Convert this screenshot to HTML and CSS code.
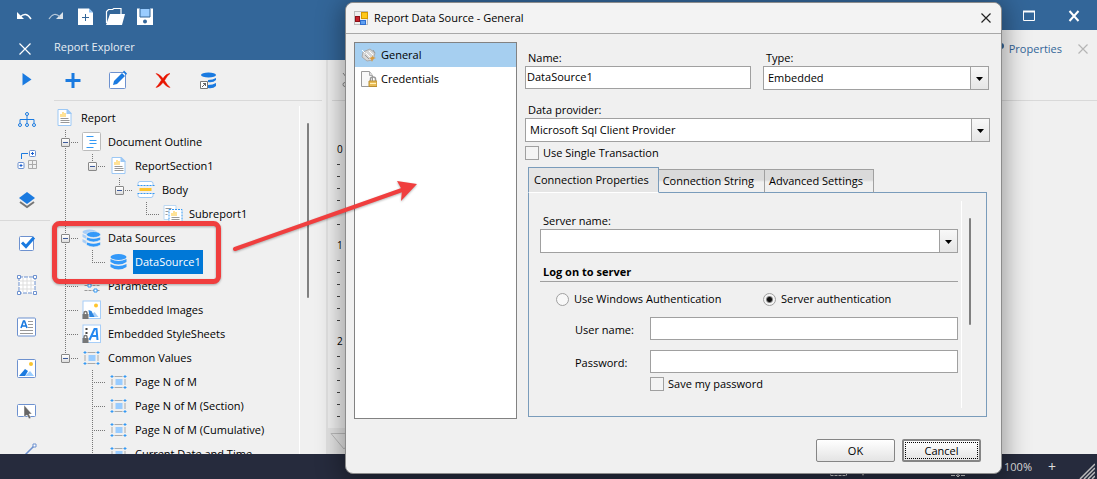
FILE: index.html
```html
<!DOCTYPE html>
<html lang="en">
<head>
<meta charset="utf-8">
<title>Report Designer</title>
<link rel="stylesheet" href="styles.css">
</head>
<body>
<svg class="symbols" aria-hidden="true">
  <symbol id="i-report" viewBox="0 0 20 20"><path d="M3.500 1.500h9l4 4v12h-13z" fill="#fff" stroke="#9cc8f5"/><path d="M12 1h1l4 4v1h-5z" fill="#9cc8f5"/><path d="M6.500 6v3M8.500 4v5M10.500 5v4" stroke="#ffc52e"/><path d="M6 10.500h8M6 12.500h9M6 14.500h9" stroke="#999"/></symbol>
  <symbol id="i-outline" viewBox="0 0 20 20"><rect x="1" y=".5" width="18" height="18" rx="1" fill="#fff" stroke="#bbb"/><path d="M5 4.500h7M8 8.500h7M8 11.500h7M5 15.500h7" stroke="#3399f5"/></symbol>
  <symbol id="i-body" viewBox="0 0 20 20"><path d="M2.500 5V3.500q0-2 2-2h11q2 0 2 2V5M2.500 14v1.500q0 2 2 2h11q2 0 2-2V14" fill="#fff" stroke="#9cc8f5"/><path d="M2 5.500h17M2 13.500h17" stroke="#3399f5" stroke-dasharray="2 1"/><path d="M4 8h12v3H4z" fill="#ffc52e"/></symbol>
  <symbol id="i-subreport" viewBox="0 0 20 20"><path d="M1.500 1.500h12v14h-12z" fill="#fff" stroke="#bcd8f2"/><path d="M3 4.500h6M3 7.500h3M3 10.500h2" stroke="#999"/><path d="M6.500 5.500h13v13h-13z" fill="#fff" stroke="#3399f5" stroke-dasharray="2 1"/><path d="M9.500 9v3M11.500 7v5M13.500 8v4" stroke="#ffc52e"/><path d="M9 13.500h8M9 15.500h8" stroke="#999"/></symbol>
  <symbol id="i-db" viewBox="0 0 20 20"><g fill="#3399f9"><ellipse cx="10" cy="5" rx="8" ry="3"/><path d="M2 7q8 4 16 0v3q-8 5-16 0zM2 12q8 4 16 0v3q-8 5-16 0z"/></g></symbol>
  <symbol id="i-dbs" viewBox="0 0 20 20"><g fill="#a7cef8"><ellipse cx="8" cy="4" rx="7" ry="2.500"/><path d="M1 6l4 2v3l-4-2zM1 11l4 2v3l-4-2z"/></g><g fill="#3399f9" stroke="#f0f0f0" stroke-width=".6"><ellipse cx="12" cy="6.500" rx="7" ry="3"/><path d="M5 9q7 3 14 0v3q-7 4-14 0zM5 14q7 3 14 0v3q-7 4-14 0z"/></g></symbol>
  <symbol id="i-params" viewBox="0 0 20 20"><path d="M3 9.500h16M3 14.500h16" stroke="#999" stroke-dasharray="3 1"/><path d="M6.500 8h3v3h-3zM12.500 13h3v3h-3z" fill="#fff" stroke="#3399f5"/></symbol>
  <symbol id="i-lock" viewBox="0 0 20 20"><path d="M2.500 15v-2q0-1.500 1.500-1.500T5.500 13v2" fill="none" stroke="#777" stroke-width="1.500"/><path d="M1 14h6v5H1z" fill="#777"/></symbol>
  <symbol id="i-images" viewBox="0 0 20 20"><rect x="1.500" y="1" width="17.500" height="17.500" fill="#fff" stroke="#a7cef8"/><circle cx="14.500" cy="5.500" r="2" fill="#ffc52e"/><path d="M7 17l6-5 4 5z" fill="#a7cef8"/><path d="M7 10l3 1 3 6H8z" fill="#2f86e0"/><use href="#i-lock"/></symbol>
  <symbol id="i-styles" viewBox="0 0 20 20"><rect x="1.500" y="1" width="17.500" height="17.500" fill="#fff" stroke="#a7cef8"/><path d="M4 4h2v2H4zM4 8h2v2H4z" fill="#444"/><path d="M8 16l5-11h2l1 11M10 12h6" fill="none" stroke="#2488f0" stroke-width="2"/><use href="#i-lock"/></symbol>
  <symbol id="i-value" viewBox="0 0 20 20"><path d="M6 4.500h8M6 15.500h8M3.500 7v6M16.500 7v6" stroke="#aaa"/><path d="M7 7h7v6H7z" fill="#99ccff"/><path d="M3.500 3v3M2 4.500h3M16.500 3v3M15 4.500h3M3.500 14v3M2 15.500h3M16.500 14v3M15 15.500h3" stroke="#3399f5"/></symbol>
</svg>

<div class="app">
  <header class="titlebar">
    <div class="quick">
      <button aria-label="Undo"><svg width="18" height="18" viewBox="0 0 18 18"><path d="M1 4v7h7z" fill="#fff"/><path d="M4 9Q10 3 15 11" fill="none" stroke="#fff" stroke-width="1.500"/></svg></button>
      <button aria-label="Redo"><svg width="18" height="18" viewBox="0 0 18 18"><path d="M17 4v7h-7z" fill="#dce3ea"/><path d="M14 9Q8 3 3 11" fill="none" stroke="#b9c9da" stroke-width="1.200"/></svg></button>
      <button aria-label="New"><svg width="18" height="18" viewBox="0 0 18 18"><path d="M2 .5h11l4 4V17H2z" fill="#fff"/><path d="M13 .5l4 4h-4z" fill="#8cc0f5"/><path d="M9.500 6v7M6 9.500h7" stroke="#336699"/></svg></button>
      <button aria-label="Open"><svg width="20" height="18" viewBox="0 0 20 18"><path d="M1.500 15V3.500l2-2h4l1.500-1h7V6" fill="none" stroke="#fff" stroke-width="1.200"/><path d="M5 6h15l-3 11H1z" fill="#fff"/></svg></button>
      <button aria-label="Save"><svg width="18" height="18" viewBox="0 0 18 18"><path d="M1 .5h16V17H1z" fill="#fff"/><path d="M4 .5h10V9H4z" fill="#99ccff" stroke="#336699"/><circle cx="9" cy="13.500" r="2" fill="#336699"/></svg></button>
    </div>
    <div class="window-buttons">
      <button aria-label="Maximize"><svg width="14" height="12" viewBox="0 0 14 12"><path d="M1.500 1.500h11v9h-11z" fill="none" stroke="#fff"/><path d="M1 1.500h12" stroke="#fff" stroke-width="2"/></svg></button>
      <button aria-label="Close window"><svg width="12" height="12" viewBox="0 0 12 12"><path d="M1.500 1l9 10M10.500 1l-9 10" stroke="#fff" stroke-width="2"/></svg></button>
    </div>
  </header>

  <main class="workspace">
    <nav class="rail" aria-label="Tools">
      <div class="rail-head"><button aria-label="Close panel"><svg width="12" height="12" viewBox="0 0 12 12"><path d="M.5.5l11 11M11.500.5l-11 11" stroke="#fff" stroke-width="1.200"/></svg></button></div>
      <div class="rail-group">
        <button aria-label="Preview"><svg width="20" height="20" viewBox="0 0 20 20"><path d="M5.500 3l9 6.500-9 6z" fill="#1a7ae0"/></svg></button>
        <button aria-label="Explorer"><svg width="20" height="20" viewBox="0 0 20 20"><g fill="none" stroke="#1a7ae0"><circle cx="10" cy="4" r="1.500"/><circle cx="3" cy="15" r="1.500"/><circle cx="10" cy="15" r="1.500"/><circle cx="17" cy="15" r="1.500"/><path d="M10 5.500v8M3 13V9.500h14V13"/></g></svg></button>
        <button aria-label="Groups"><svg width="20" height="20" viewBox="0 0 20 20"><path d="M4.500 9V3.500H11" fill="none" stroke="#1a7ae0"/><g fill="#fff" stroke="#6d91cf"><rect x="12.500" y=".5" width="6" height="6" rx="1"/><rect x="1" y="12.500" width="6" height="6" rx="1"/></g><path d="M14 3.500h3M15.500 2v3M2.500 15.500h3M4 14v3" stroke="#1a5fd0"/><path d="M11.500 10.500h8v8h-8zM15.500 10.500v8M11.500 14.500h8" fill="none" stroke="#aaa"/></svg></button>
        <button aria-label="Layers"><svg width="20" height="20" viewBox="0 0 20 20"><path d="M10 2l8 6-8 6-8-6z" fill="#1a7ae0"/><path d="M3 12l7 5 7-5" fill="none" stroke="#777" stroke-width="2"/></svg></button>
      </div>
      <div class="rail-group rail-items">
        <button aria-label="Check box"><svg width="20" height="20" viewBox="0 0 20 20"><rect x="2.500" y="3.500" width="14" height="14" rx="1" fill="#fff" stroke="#6d91cf"/><path d="M5 9.500l4 4 8-9" fill="none" stroke="#1a7ae0" stroke-width="3"/></svg></button>
        <button aria-label="Panel"><svg width="20" height="20" viewBox="0 0 20 20"><path d="M2 2h16v16H2z" fill="#fff"/><path d="M6 3v14M10 3v14M14 3v14M3 6h14M3 10h14M3 14h14" stroke="#ddd"/><path d="M2 2h16v16H2z" fill="none" stroke="#6d91cf" stroke-dasharray="4 1"/><path d="M.5.5h3v3h-3zM16.500.5h3v3h-3zM.5 16.500h3v3h-3zM16.500 16.500h3v3h-3z" fill="#fff" stroke="#6d91cf"/></svg></button>
        <button aria-label="Text box"><svg width="20" height="20" viewBox="0 0 20 20"><rect x=".5" y="1" width="18" height="18" rx="1" fill="#fff" stroke="#6d91cf"/><path d="M4 11l2.500-7h1L10 11M5 9h4" fill="none" stroke="#1a7ae0" stroke-width="1.600"/><path d="M11 4.500h5M11 7.500h5M11 10.500h5M3 13.500h13M3 16.500h13" stroke="#999"/></svg></button>
        <button aria-label="Picture"><svg width="20" height="20" viewBox="0 0 20 20"><rect x=".5" y=".5" width="18" height="18" rx="1" fill="#fff" stroke="#6d91cf"/><circle cx="14" cy="5" r="2" fill="#f8c32e"/><path d="M8 17l5-5 4 5z" fill="#99ccff"/><path d="M2 17l6-7 3 2-3 5z" fill="#1a7ae0"/></svg></button>
        <button aria-label="Button"><svg width="20" height="20" viewBox="0 0 20 20"><rect x=".5" y="3.500" width="18" height="12" rx="1" fill="#fff" stroke="#6d91cf"/><path d="M7 4v12l3-2 2 4 2-1-2-4h3z" fill="#666" stroke="#fff" stroke-width=".5"/></svg></button>
        <button aria-label="Line"><svg width="20" height="20" viewBox="0 0 20 20"><path d="M4 16L17 3" stroke="#6d91cf" stroke-width="1.500"/><path d="M16 1h3v3h-3z" fill="#fff" stroke="#6d91cf"/></svg></button>
      </div>
    </nav>

    <section class="explorer">
      <h2 class="panel-head">Report Explorer</h2>
      <div class="tools">
        <button aria-label="Add"><svg width="20" height="20" viewBox="0 0 20 20"><path d="M10 3v15M2.500 10.500h15" stroke="#1a7ae0" stroke-width="3"/></svg></button>
        <button aria-label="Edit"><svg width="20" height="20" viewBox="0 0 20 20"><rect x="1.500" y="2.500" width="16" height="16" rx="1" fill="#fff" stroke="#6d91cf"/><path d="M5 15l1-4 8-8 3 3-8 8zM15 2l1-1.500 3 3L18 5z" fill="#1a7ae0"/></svg></button>
        <button aria-label="Delete"><svg width="20" height="20" viewBox="0 0 20 20"><path d="M3 3.500q3 0 7 5 3-5 7-5-3 2-5.500 7 3 5 5.500 7-3 0-7-5-4 5-7 5 2-2 5.500-7.500Q6 6 3 3.500z" fill="#e81500" stroke="#e81500" stroke-width=".5"/></svg></button>
        <button aria-label="Add data source"><svg width="20" height="20" viewBox="0 0 20 20"><g fill="#1a7ae0"><ellipse cx="10.500" cy="5" rx="7.500" ry="2.500"/><path d="M10 10q5 0 8-2v2q-3 3-8 2zM10 15q5 0 8-2v3q-3 3-8 2z"/></g><path d="M2.500 11.500h7v7h-7z" fill="#fff" stroke="#777"/><path d="M4 17l4-4M5 13.500h2.500V16" fill="none" stroke="#666"/></svg></button>
      </div>
      <div class="tree-area">
        <ul class="tree">
          <li><svg><use href="#i-report"/></svg><span>Report</span></li>
          <li><i class="v h"><b></b></i><svg><use href="#i-outline"/></svg><span>Document Outline</span></li>
          <li><i class="v"></i><i class="end h"><b></b></i><svg><use href="#i-report"/></svg><span>ReportSection1</span></li>
          <li><i class="v"></i><i></i><i class="end h"><b></b></i><svg><use href="#i-body"/></svg><span>Body</span></li>
          <li><i class="v"></i><i></i><i></i><i class="end h"></i><svg><use href="#i-subreport"/></svg><span>Subreport1</span></li>
          <li><i class="v h"><b></b></i><svg><use href="#i-dbs"/></svg><span>Data Sources</span></li>
          <li><i class="v"></i><i class="end h"></i><svg><use href="#i-db"/></svg><span class="selected">DataSource1</span></li>
          <li><i class="v h"></i><svg><use href="#i-params"/></svg><span>Parameters</span></li>
          <li><i class="v h"></i><svg><use href="#i-images"/></svg><span>Embedded Images</span></li>
          <li><i class="v h"></i><svg><use href="#i-styles"/></svg><span>Embedded StyleSheets</span></li>
          <li><i class="end h"><b></b></i><svg><use href="#i-value"/></svg><span>Common Values</span></li>
          <li><i></i><i class="v h"></i><svg><use href="#i-value"/></svg><span>Page N of M</span></li>
          <li><i></i><i class="v h"></i><svg><use href="#i-value"/></svg><span>Page N of M (Section)</span></li>
          <li><i></i><i class="v h"></i><svg><use href="#i-value"/></svg><span>Page N of M (Cumulative)</span></li>
          <li><i></i><i class="v h"></i><svg><use href="#i-value"/></svg><span>Current Date and Time</span></li>
        </ul>
        <div class="scroll"><div class="thumb"></div></div>
      </div>
    </section>

    <section class="designer">
      <div class="panel-head"></div>
      <div class="design-tools"><svg width="12" height="16" viewBox="0 0 12 16"><path d="M1 1l7 9M10 1L4 10" stroke="#888"/><circle cx="3" cy="12.500" r="2" fill="none" stroke="#888"/></svg></div>
      <div class="ruler"><span>0</span><span>1</span><span>2</span></div>
      <div class="corner"><svg width="30" height="24" viewBox="0 0 30 24"><path d="M3 5.500h26L16 21z" fill="none" stroke="#bbb"/></svg></div>
    </section>

    <section class="properties">
      <div class="prop-head"><svg width="12" height="12" viewBox="0 0 12 12"><circle cx="8" cy="5" r="3" fill="#33669a"/></svg><h2>Properties</h2><button aria-label="Close properties"><svg width="10" height="10" viewBox="0 0 10 10"><path d="M.5.5l9 9M9.500.5l-9 9" stroke="#b5b5b5" stroke-width="1.200"/></svg></button></div>
    </section>
  </main>

  <footer class="status">
    <svg width="40" height="18" viewBox="0 0 40 18"><path d="M1.500 3.500h16v11h-16z" fill="none" stroke="#ccc" stroke-dasharray="3 1"/><path d="M31 10h6l-3 5z" fill="#999"/></svg>
    <svg class="fit" width="18" height="18" viewBox="0 0 18 18"><path d="M2 14.500h4M12 14.500h4M9 7v9M7 14l2 2 2-2" fill="none" stroke="#ccc"/></svg>
    <span class="zoom">100%</span>
    <button aria-label="Zoom in">+</button>
    <svg class="grip" width="16" height="16" viewBox="0 0 16 16"><path d="M1 16L16 1M5 16L16 5M9 16l7-7M13 16l3-3" stroke="#bbb" stroke-width="1.500"/></svg>
  </footer>
</div>

<form class="dialog" role="dialog" aria-labelledby="dialog-title">
  <div class="dialog-title">
    <svg width="15" height="15" viewBox="0 0 15 15"><rect x=".5" y=".5" width="13" height="13" fill="#eee" stroke="#bbb"/><rect x="7.500" y="1.500" width="6" height="6" fill="#ffc81a" stroke="#d69a00"/><rect x="1.500" y="5.500" width="4" height="5" fill="#c8202a" stroke="#8c1018"/><rect x="6.500" y="9.500" width="5" height="4" fill="#5f9ff0" stroke="#2f6fd0"/></svg>
    <h1 id="dialog-title">Report Data Source - General</h1>
    <button type="button" aria-label="Close"><svg width="10" height="10" viewBox="0 0 10 10"><path d="M.5.5l9 9M9.500.5l-9 9" stroke="#222" stroke-width="1.200"/></svg></button>
  </div>
  <div class="dialog-body">
    <ul class="pages">
      <li class="current"><svg width="16" height="16" viewBox="0 0 16 16"><path d="M2 5l7-3 5 4-2 7-6 1-5-4z" fill="#d7d7d7" stroke="#aaa"/><path d="M1 3l3 3M5 6l5 5M8 4l4 4" stroke="#fff"/><path d="M4 8l4 4M12 3l2 3" stroke="#999"/><path d="M11 8l1 2 3 1-3 1-1 3-1-3-2-1 3-1z" fill="#d99a3a"/></svg>General</li>
      <li><svg width="16" height="16" viewBox="0 0 16 16"><path d="M.5.5h8l3 4v11H.5z" fill="#f8f8f8" stroke="#999"/><path d="M8.500.5v4h3" fill="#ddd" stroke="#aaa"/><path d="M9.500 10V8q0-2 2.500-2t2.500 2v2" fill="none" stroke="#999" stroke-width="1.500"/><path d="M8 10h8v5.500H8z" fill="#e9bd57" stroke="#b98e33"/><path d="M9 12.500h6" stroke="#fff0bb"/></svg>Credentials</li>
    </ul>
    <div class="settings">
      <div class="pair">
        <div class="field"><label for="name">Name:</label><input class="box" id="name" value="DataSource1"></div>
        <div class="field"><label for="type">Type:</label><div class="combo"><select id="type"><option>Embedded</option></select></div></div>
      </div>
      <div class="field provider"><label for="provider">Data provider:</label><div class="combo"><select id="provider"><option>Microsoft Sql Client Provider</option></select></div></div>
      <label class="check"><input type="checkbox">Use Single Transaction</label>
      <div class="tabs" role="tablist">
        <button type="button" role="tab" aria-selected="true">Connection Properties</button>
        <button type="button" role="tab">Connection String</button>
        <button type="button" role="tab">Advanced Settings</button>
      </div>
      <div class="tab-panel">
        <div class="connection">
          <div class="field"><label for="server">Server name:</label><div class="combo"><select id="server"><option></option></select></div></div>
          <h3>Log on to server</h3>
          <div class="radios">
            <label><input type="radio" name="auth">Use Windows Authentication</label>
            <label><input type="radio" name="auth" checked>Server authentication</label>
          </div>
          <div class="login">
            <label for="user">User name:</label><input class="box" id="user">
            <label for="password">Password:</label><input class="box" id="password" type="password">
          </div>
          <label class="check save"><input type="checkbox">Save my password</label>
        </div>
        <div class="scroll"><div class="thumb"></div></div>
      </div>
      <div class="actions"><button type="button">OK</button><button type="button" class="focused">Cancel</button></div>
    </div>
  </div>
</form>

<svg class="callout" width="420" height="300" viewBox="0 0 420 300" aria-hidden="true">
  <rect x="54.500" y="223.500" width="164" height="58" rx="5" fill="none" stroke="#f03e3e" stroke-width="5"/>
  <path d="M235 249L402 190" stroke="#f03e3e" stroke-width="4" stroke-linecap="round"/>
  <path d="M417 184l-20-3 5 9-1 11z" fill="#f03e3e"/>
</svg>
</body>
</html>
```
FILE: styles.css
```css
* { box-sizing: border-box; }
body { margin: 0; font: 11px/16px "Open Sans", "Noto Sans", sans-serif; color: #000; overflow: hidden; }
h1, h2, h3, ul { margin: 0; padding: 0; font: inherit; list-style: none; }
button, input, select { font: inherit; color: inherit; margin: 0; }
button { border: 0; padding: 0; background: none; display: flex; align-items: center; justify-content: center; }
svg { display: block; flex: none; }
.symbols { position: absolute; width: 0; height: 0; }

.app { height: 100vh; display: flex; flex-direction: column; background: #f0f0f0; }
.titlebar { height: 30px; flex: none; display: flex; justify-content: space-between; background: #336699; }
.quick { display: flex; padding: 3px 0 0 10px; }
.quick button { width: 30px; }
.window-buttons { display: flex; padding: 2px 1px 0 0; }
.window-buttons button { width: 45px; }

.workspace { flex: 1; min-height: 0; display: flex; overflow: hidden; }
.rail { width: 50px; flex: none; }
.rail-head { height: 30px; background: #336699; padding: 13px 0 0 19px; }
.rail-group button { width: 100%; height: 40px; padding-left: 3px; }
.rail-items { border-top: 1px solid #d9d9d9; padding-top: 1px; }
.rail-items button { height: 42px; }

.panel-head { height: 30px; flex: none; background: #336699; color: #e6edf4; padding: 9px 0 0 4px; }
.explorer { width: 278px; flex: none; display: flex; flex-direction: column; border-right: 2px solid #e2e2e2; }
.explorer .panel-head { margin-right: -2px; }
.tools { height: 41px; flex: none; display: flex; border-bottom: 1px solid #d9d9d9; margin: 0 4px; }
.tools button { width: 45px; }
.tools button:first-child { width: 41px; padding-right: 4px; }
.tree-area { flex: 1; min-height: 0; display: flex; padding: 5px 17px 0 2px; }
.tree { flex: 1; overflow: hidden; }
.tree li { display: flex; height: 24px; align-items: center; white-space: nowrap; }
.tree svg { width: 25px; height: 20px; margin-right: 2px; }
.tree span { padding: 0 2px; line-height: 24px; }
.tree .selected { background: #0078d7; color: #fff; }
.tree i {
  width: 27px; height: 24px; flex: none; display: flex; align-items: center; padding-left: 9px;
  --down: repeating-linear-gradient(#777 0 1px, transparent 1px 2px);
  --across: repeating-linear-gradient(to right, #777 0 1px, transparent 1px 2px);
  background-repeat: no-repeat;
}
.tree .v { background-image: linear-gradient(transparent, transparent), var(--down); background-size: 0 0, 1px 100%; background-position: 0 0, 13px 0; }
.tree .h { background-image: var(--across), var(--down); background-size: 14px 1px, 1px 100%; background-position: 13px 12px, 13px 0; }
.tree .end { background-size: 14px 1px, 1px 12px; }
.tree b {
  width: 9px; height: 9px; border: 1px solid #888; border-radius: 1px;
  background: linear-gradient(#3c5a9a, #3c5a9a) center / 5px 1px no-repeat, linear-gradient(#fff, #ddd);
}
.scroll { display: flex; }
.tree-area .scroll { border-left: 1px solid #fff; padding: 17px 0 0 7px; }
.thumb { width: 2px; background: #808080; border-radius: 1px; }
.tree-area .thumb { height: 175px; }

.designer { flex: 1; display: flex; flex-direction: column; min-width: 0; }
.design-tools { height: 41px; flex: none; padding: 12px 0 0 10px; margin-left: 4px; border-bottom: 1px solid #d9d9d9; }
.ruler { flex: 1; min-height: 0; overflow: hidden; padding: 40px 0 0 9px; font-size: 10px; display: flex; flex-direction: column; }
.ruler span { height: 96px; flex: none; background: repeating-linear-gradient(transparent 0 11px, #444 11px 12px) 0 12px / 3px 72px no-repeat; }
.corner { flex: none; background: #e4e4e4; height: 26px; }
.properties { width: 110px; flex: none; }
.prop-head { height: 71px; border-bottom: 1px solid #d9d9d9; color: #336699; display: flex; align-items: flex-start; justify-content: flex-end; gap: 4px; padding: 11px 9px 0 0; }
.prop-head button { padding: 3px 0 0 12px; }
.status { height: 25px; flex: none; background: #262b3d; color: #ddd; display: flex; align-items: center; justify-content: flex-end; }
.status .fit { margin: 0 37px 0 80px; }
.status svg { align-self: flex-end; }
.status button { width: 40px; font-size: 14px; }
.status .grip { margin: 0 2px 0 7px; }

.dialog {
  position: absolute; inset: 2px 95px 5px 345px; display: flex; flex-direction: column;
  background: #f0f0f0; border: 1px solid #8c8c8c; border-radius: 8px; box-shadow: 0 4px 24px 4px rgba(0, 0, 0, .35);
}
.dialog-title { height: 31px; flex: none; display: flex; align-items: center; gap: 5px; padding: 0 10px 0 8px; border-bottom: 1px solid #a8a8a8; background: #f3f3f3; border-radius: 8px 8px 0 0; }
.dialog-title h1 { flex: 1; }
.dialog-body { flex: 1; min-height: 0; display: flex; gap: 8px; padding: 8px 11px 11px 8px; }
.pages { width: 163px; flex: none; border: 1px solid #828282; background: #fff; margin-bottom: 43px; }
.pages li { height: 24px; display: flex; align-items: center; gap: 4px; padding-left: 6px; }
.pages .current { background: #a6cff0; }
.settings { flex: 1; display: flex; flex-direction: column; min-width: 0; padding-top: 8px; }
.pair { display: grid; grid-template-columns: 1fr 1fr; gap: 12px; padding-right: 1px; }
.field { display: flex; flex-direction: column; }
.field > label { padding-left: 3px; }
.box { width: 100%; height: 23px; border: 1px solid #a0a0a0; background: #fff; padding: 0 1px 3px; border-radius: 0; }
.combo { position: relative; }
.combo select {
  display: block; width: 100%; height: 24px; appearance: none; border: 1px solid #a0a0a0; border-radius: 0; padding: 0 20px 0 4px;
  background: linear-gradient(#a0a0a0, #a0a0a0) right 17px top / 1px 100% no-repeat, linear-gradient(#f8f8f8, #e6e6e6) right / 17px 100% no-repeat, #fff;
}
.combo::after { content: ""; position: absolute; right: 6px; top: 11px; width: 7px; height: 4px; background: #000; clip-path: polygon(0 0, 100% 0, 50% 100%); pointer-events: none; }
.provider { margin-top: 12px; }
.check { display: flex; align-items: center; gap: 4px; }
input[type="checkbox"] { appearance: none; width: 14px; height: 14px; border: 1px solid #a0a0a0; background: #f4f4f4; }
.settings > .check { margin-top: 3px; }
.tabs { display: flex; align-items: flex-end; margin: 6px 0 -1px 3px; z-index: 1; }
.tabs button { height: 24px; padding: 0 10px 0 4px; border: solid #a0a0a0; border-width: 1px 1px 0 0; border-bottom: 1px solid #7a9cbb; background: linear-gradient(#dadada 0 10px, #f0f0f0 12px); }
.tabs [aria-selected] { height: 26px; padding: 0 9px 0 5px; border: 1px solid #7a9cbb; border-bottom-color: #fff; background: #e5e5e5; }
.tab-panel { flex: 1; min-height: 0; display: flex; border: 1px solid #7a9cbb; margin: 0 3px 22px; padding: 8px 15px 8px 11px; }
.connection { flex: 1; padding: 12px 3px 0 0; border-right: 1px solid #fff; }
.connection h3 { font-weight: 700; padding: 11px 3px 1px; border-bottom: 1px solid #a0a0a0; }
.tab-panel .scroll { padding: 17px 0 0 7px; }
.tab-panel .thumb { height: 107px; }
.radios { display: grid; grid-template-columns: 207px 1fr; padding: 9px 0 10px 16px; }
.radios label { display: flex; align-items: center; gap: 5px; }
.radios input { appearance: none; width: 13px; height: 13px; border: 1px solid #a0a0a0; border-radius: 50%; background: #f8f8f8; }
.radios input:checked { background: radial-gradient(circle, #111 0 2px, #f4f4f4 4px); }
.login { display: grid; grid-template-columns: 75px 1fr; row-gap: 10px; padding-left: 35px; align-items: center; }
.login label { padding-top: 2px; }
.save { margin: 3px 0 0 110px; }
.actions { display: flex; justify-content: flex-end; gap: 7px; padding-right: 9px; }
.actions button { width: 79px; height: 23px; border: 1px solid #858585; border-radius: 2px; background: linear-gradient(#fff, #e4e4e4); }
.actions .focused { border-width: 2px; outline: 1px dotted #000; outline-offset: -4px; }
.callout { position: absolute; left: 0; top: 0; z-index: 3; pointer-events: none; filter: drop-shadow(0 1px 1px rgba(0, 0, 0, .3)); }
```
